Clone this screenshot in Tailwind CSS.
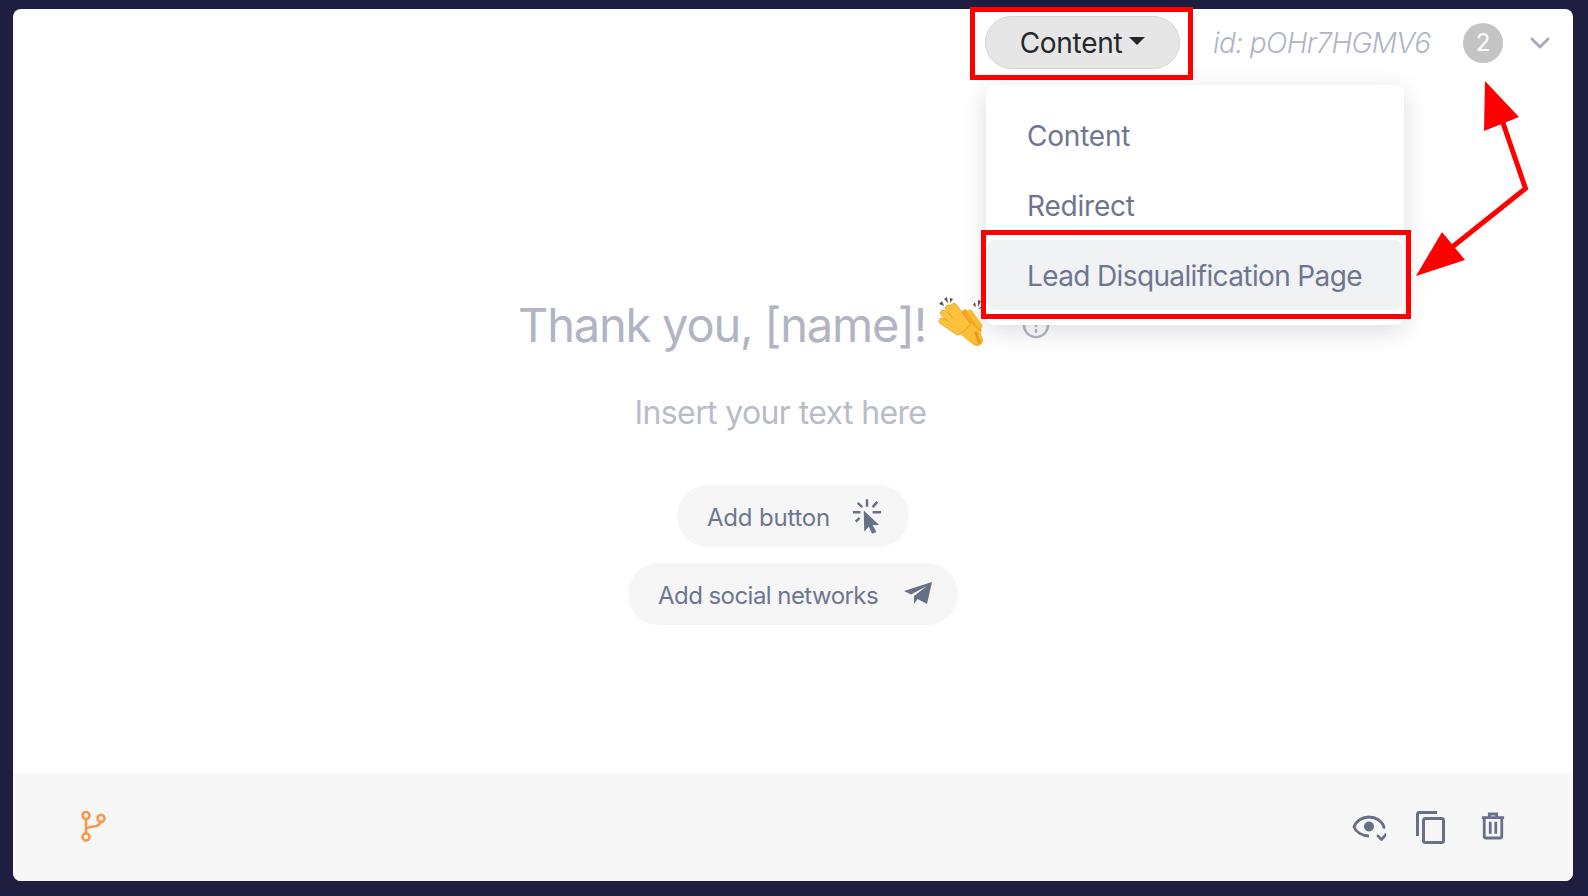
<!DOCTYPE html>
<html>
<head>
<meta charset="utf-8">
<script src="https://cdn.jsdelivr.net/npm/@tailwindcss/browser@4"></script>
</head>
<body class="m-0 overflow-hidden bg-[#1e1f40] font-['Inter','Liberation_Sans',sans-serif]">
<div class="relative h-[896px] w-[1588px] px-[13px] pb-[15px] pt-[9px]">
  <div class="relative flex h-[872px] w-[1560px] flex-col overflow-hidden rounded-[8px] bg-white">
    <header class="flex h-[60px] shrink-0 items-end justify-end pr-[23px]">
      <button class="flex h-[53px] w-[195px] items-center justify-center gap-[7px] rounded-full border border-[#d6d6d6] bg-[#e6e6e6] text-[28px] leading-none tracking-[-0.3px] text-[#25272b]">
        Content
        <span class="mb-[4px] h-0 w-0 border-x-[8px] border-t-[8px] border-x-transparent border-t-[#25272b]"></span>
      </button>
      <span class="ml-[33px] flex h-[53px] w-[218px] items-center whitespace-nowrap text-[28px] font-light italic tracking-[-0.6px] text-[#b1b5c3]">id: pOHr7HGMV6</span>
      <span class="ml-[32px] mb-[6px] flex h-[40px] w-[40px] items-center justify-center rounded-full bg-[#c4c4c4] text-[24px] text-white">2</span>
      <svg class="mb-[16px] ml-[27px]" width="20" height="20" viewBox="0 0 20 20" fill="none" stroke="#a8acb9" stroke-width="3" stroke-linecap="round" stroke-linejoin="round"><path d="M2 6l8 8 8-8"/></svg>
    </header>

    <main class="flex flex-1 flex-col items-center">
      <div class="mt-[226px] mr-[18px] flex h-[60px] items-center">
        <h1 class="whitespace-nowrap text-[47px] font-normal leading-[60px] tracking-[-1.2px] text-[#b1b5c3]">Thank you, [name]!</h1>
        <svg class="ml-[10px] mt-[-6px]" width="52" height="52" viewBox="0 0 52 52" fill="none" stroke-linecap="round">
          <g fill="#55555a"><path d="M3 8l3-3 2 5zM8 3l3-2 1 6zM14 2l3 1-3 4zM37 9l2-3 1 5zM42 4l3 1-3 6zM46 10l2 2-6 1z"/></g>
          <path d="M29 17L42 34" stroke="#f7a823" stroke-width="7"/>
          <path d="M34 16L44 30" stroke="#fbbf36" stroke-width="5"/>
          <path d="M27 32L41 44" stroke="#f9b32c" stroke-width="12"/>
          <path d="M24 28L38 40" stroke="#fbbf36" stroke-width="15"/>
          <g stroke="#e39a1e" stroke-width="6.600"><path d="M6 25L22 36M7.500 17L25 34M12.500 12L28 31M18 10.500L31 28"/></g>
          <g stroke="#fcc23c" stroke-width="5.400"><path d="M6 25L22 36M7.500 17L25 34M12.500 12L28 31M18 10.500L31 28"/></g>
          <path d="M40 37L43 46" stroke="#e89a1c" stroke-width="3"/>
        </svg>
        <svg class="ml-[34px]" width="28" height="28" viewBox="0 0 28 28" fill="none" stroke="#b1b5c3" stroke-width="2.400"><circle cx="14" cy="14" r="12"/><path d="M11 11c0-4 6-4 6 0 0 2-3 2-3 4M14 19v2" stroke-linecap="round"/></svg>
      </div>
      <p class="mt-[38px] mr-[25px] text-[32px] leading-[40px] tracking-[-0.63px] text-[#b8bcc8]">Insert your text here</p>
      <button class="mt-[52px] flex h-[62px] w-[232px] items-center gap-[22px] rounded-full bg-[#f6f6f6] pl-[30px] text-[24px] tracking-[-0.2px] text-[#6d7690]">
        <span class="pt-[4px]">Add button</span>
        <svg width="30" height="38" viewBox="0 0 32 38" fill="#677089"><path d="M12.500 13 L29 28.500 L22 28.500 L26 36 L21.500 38 L18 30.500 L13 35.500 Z"/><g stroke="#677089" stroke-width="2.600" fill="none"><path d="M16 1v8M6 5l5 4.500M27 4l-5 5.500M1 15h8M22 15h9M8 21l-4 4"/></g></svg>
      </button>
      <button class="mt-[16px] flex h-[62px] w-[330px] items-center gap-[26px] rounded-full bg-[#f6f6f6] pl-[30px] text-[24px] tracking-[-0.55px] text-[#6d7690]">
        <span class="pt-[4px]">Add social networks</span>
        <svg width="28" height="24" viewBox="0 0 28 24" fill="#677089"><path d="M28 0 L23 22 L13.500 17 L10 22 L10 14 L23 4 L7 12.500 L0 9 Z"/></svg>
      </button>
    </main>

    <footer class="flex h-[108px] shrink-0 items-center justify-between bg-[#f7f7f7] px-[68px]">
      <svg width="26" height="32" viewBox="0 0 26 32" fill="none" stroke="#f7994a" stroke-width="2.600"><circle cx="5" cy="4.500" r="3.500"/><circle cx="5" cy="26" r="3.500"/><circle cx="20" cy="7.500" r="3.500"/><path d="M5 8v14M5.500 17.500c2-2 6-1.500 10-2.500 3-1 4-3 4.500-4.500" stroke-linecap="round"/></svg>
      <div class="flex items-center">
        <svg width="34" height="30" viewBox="0 0 34 30" fill="none" stroke="#677089" stroke-width="2.800"><path d="M17 24c-7 0-13-4-15-9 2-6 8-10 15-10s13 4 15 10c-.2.500-.400 1-.7 1.500"/><circle cx="17" cy="14.500" r="5" fill="#677089" stroke="none"/><path d="M26 24l3.500 3.500 4.500-5" stroke-linecap="round" stroke-linejoin="round"/></svg>
        <svg class="ml-[30px]" width="29" height="33" viewBox="0 0 29 33" fill="none" stroke="#677089" stroke-width="3"><path d="M1.500 25V3a1.500 1.500 0 0 1 1.500-1.500h18"/><rect x="7.500" y="7.500" width="20" height="24" rx="2"/></svg>
        <svg class="mb-[2px] ml-[36px]" width="24" height="28" viewBox="0 0 26 29" fill="none" stroke="#677089" stroke-width="3"><path d="M1 5.500h24M9 4V1.500h8V4" /><path d="M3.500 5.500V26a1.500 1.500 0 0 0 1.500 1.500h16a1.500 1.500 0 0 0 1.500-1.500V5.500M10 10v13M16 10v13"/></svg>
      </div>
    </footer>
  </div>

  <div class="absolute left-[986px] top-[85px] flex h-[240px] w-[418px] flex-col rounded-[8px] bg-white pt-[15px] text-[28px] tracking-[-0.2px] text-[#6d7690] shadow-[0_6px_24px_rgba(40,45,70,0.16)]">
    <div class="flex h-[70px] items-center px-[41px] pt-[2px]">Content</div>
    <div class="flex h-[70px] items-center px-[41px] pt-[2px]">Redirect</div>
    <div class="mx-[1px] flex h-[70px] items-center rounded-[8px] bg-[#f1f2f4] px-[40px] pt-[2px] tracking-[-0.63px] whitespace-nowrap">Lead Disqualification Page</div>
  </div>

  <div class="absolute left-[970px] top-[7px] h-[73px] w-[223px] border-[5px] border-[#ff0000]"></div>
  <div class="absolute left-[981px] top-[230px] h-[89px] w-[430px] border-[5px] border-[#ff0000]"></div>
  <svg class="absolute left-[1400px] top-[70px]" width="140" height="220" viewBox="1400 70 140 220" fill="#ff0000">
    <path d="M1502 120 L1525.500 188.500 L1451 248" fill="none" stroke="#ff0000" stroke-width="5"/>
    <path d="M1485 81 L1519 117 L1484 131 Z"/>
    <path d="M1416 276 L1442 232 L1465 260 Z"/>
  </svg>
</div>
</body>
</html>
